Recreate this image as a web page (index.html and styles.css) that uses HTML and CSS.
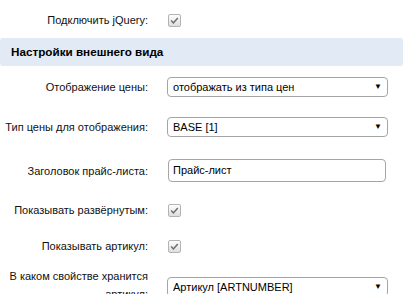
FILE: index.html
```html
<!DOCTYPE html>
<html lang="ru">
<head>
<meta charset="utf-8">
<link rel="stylesheet" href="styles.css">
</head>
<body>
<div class="form">
  <div class="row row-jq">
    <div class="label"><span>Подключить jQuery:</span></div>
    <div class="field"><span class="check"><svg viewBox="0 0 13 13" width="13" height="13"><path d="M3.2 6.6 L5.4 8.9 L9.8 3.9" fill="none" stroke="#6d6d6d" stroke-width="1.5"/></svg></span></div>
  </div>
  <div class="heading">Настройки внешнего вида</div>
  <div class="row row-s1">
    <div class="label"><span>Отображение цены:</span></div>
    <div class="field"><div class="select"><span>отображать из типа цен</span><span class="arrow">▼</span></div></div>
  </div>
  <div class="row row-s2">
    <div class="label"><span>Тип цены для отображения:</span></div>
    <div class="field"><div class="select"><span>BASE [1]</span><span class="arrow">▼</span></div></div>
  </div>
  <div class="row row-in">
    <div class="label"><span>Заголовок прайс-листа:</span></div>
    <div class="field"><div class="input">Прайс-лист</div></div>
  </div>
  <div class="row row-c1">
    <div class="label"><span>Показывать развёрнутым:</span></div>
    <div class="field"><span class="check"><svg viewBox="0 0 13 13" width="13" height="13"><path d="M3.2 6.6 L5.4 8.9 L9.8 3.9" fill="none" stroke="#6d6d6d" stroke-width="1.5"/></svg></span></div>
  </div>
  <div class="row row-c2">
    <div class="label"><span>Показывать артикул:</span></div>
    <div class="field"><span class="check"><svg viewBox="0 0 13 13" width="13" height="13"><path d="M3.2 6.6 L5.4 8.9 L9.8 3.9" fill="none" stroke="#6d6d6d" stroke-width="1.5"/></svg></span></div>
  </div>
  <div class="row row-last">
    <div class="label label-wrap"><span>В каком свойстве хранится артикул:</span></div>
    <div class="field"><div class="select"><span>Артикул [ARTNUMBER]</span><span class="arrow">▼</span></div></div>
  </div>
</div>
</body>
</html>
```

FILE: styles.css
```css
html, body {
  margin: 0;
  padding: 0;
  background: #fff;
  overflow: hidden;
}
body {
  font-family: "Liberation Sans", Arial, sans-serif;
  font-size: 11px;
  color: #000;
}
.form {
  width: 403px;
}
.row {
  display: grid;
  grid-template-columns: 148px 1fr;
  column-gap: 19px;
  align-items: center;
}
.label {
  display: flex;
  justify-content: flex-end;
  text-align: right;
  color: #111;
  line-height: 16px;
  white-space: nowrap;
}
.label-wrap {
  white-space: normal;
  padding-left: 8px;
  line-height: 18px;
}
.field {
  display: flex;
  align-items: center;
  padding-right: 16px;
}
.check {
  display: inline-block;
  width: 13px;
  height: 13px;
  box-sizing: border-box;
  border: 1px solid #b3b3b3;
  border-radius: 2px;
  background: linear-gradient(#fdfdfd, #dedede);
  position: relative;
  margin-left: 1px;
}
.check svg {
  position: absolute;
  left: -1px;
  top: -1px;
}
.heading {
  height: 28px;
  line-height: 28px;
  background: #e1eaf5;
  border-radius: 3px;
  padding-left: 11px;
  font-weight: bold;
  font-size: 11.7px;
  margin-top: 10px;
}
.select {
  width: 221px;
  height: 20px;
  box-sizing: border-box;
  border: 1px solid #a5a5a5;
  border-radius: 4px;
  background: #fff;
  display: flex;
  align-items: center;
  justify-content: space-between;
  padding: 0 5px 0 5px;
  line-height: 18px;
}
.arrow {
  font-size: 8px;
  color: #000;
}
.input {
  width: 218px;
  height: 23px;
  box-sizing: border-box;
  border: 1px solid #a5a5a5;
  border-radius: 4px;
  padding-left: 4px;
  line-height: 21px;
  margin-left: 1px;
}
.row-jq { padding-top: 12px; }
.row-s1 { padding-top: 11px; }
.row-s2 { padding-top: 20px; }
.row-in { padding-top: 22px; }
.row-c1 { padding-top: 20px; }
.row-c2 { padding-top: 20px; }
.row-last { padding-top: 13px; align-items: start; }
.row-last .field { padding-top: 10px; }
```
